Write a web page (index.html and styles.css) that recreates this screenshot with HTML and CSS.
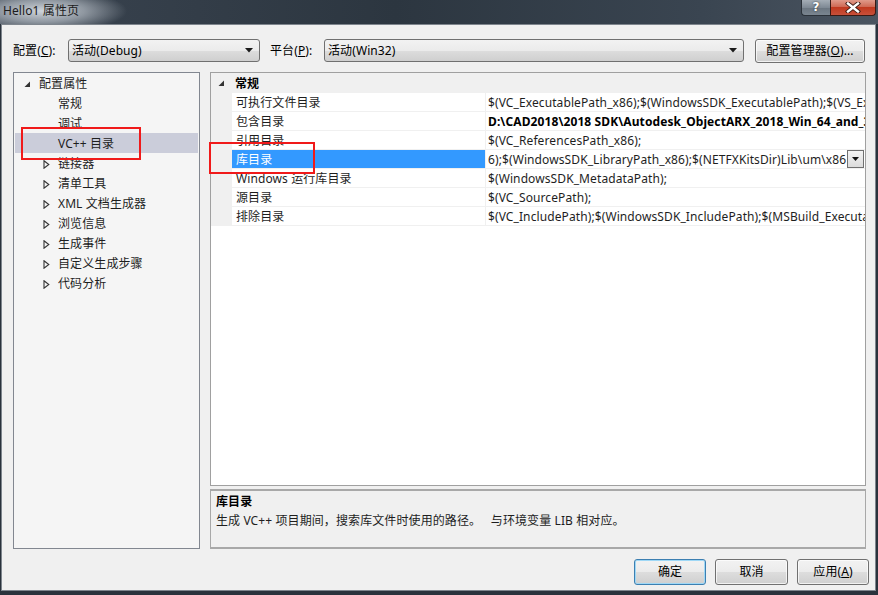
FILE: index.html
```html
<!DOCTYPE html>
<html lang="zh-CN">
<head>
  <meta charset="UTF-8">
  <title>Hello1 属性页</title>
  <link rel="stylesheet" href="styles.css">
</head>
<body>
  <div class="window">
    <div class="titlebar">
      <span class="title">Hello1 属性页</span>
      <div class="caption-btns">
        <div class="cap-help">?</div>
        <div class="cap-close">
          <svg width="16" height="11" viewBox="0 0 16 11"><path d="M3 1.5 L13 9.5 M13 1.5 L3 9.5" stroke="#3a1a14" stroke-width="4.2" stroke-linecap="square"/><path d="M3 1.5 L13 9.5 M13 1.5 L3 9.5" stroke="#ffffff" stroke-width="2.4" stroke-linecap="square"/></svg>
        </div>
      </div>
    </div>

    <div class="client">
      <div class="toolbar">
        <span class="lbl lbl-config">配置(<u>C</u>):</span>
        <div class="combo combo-config">
          <span>活动(Debug)</span>
          <svg class="arrow" width="8" height="5" viewBox="0 0 8 5"><path d="M0 0 H8 L4 4.5 Z" fill="#1a1a1a"/></svg>
        </div>
        <span class="lbl lbl-platform">平台(<u>P</u>):</span>
        <div class="combo combo-platform">
          <span>活动(Win32)</span>
          <svg class="arrow" width="8" height="5" viewBox="0 0 8 5"><path d="M0 0 H8 L4 4.5 Z" fill="#1a1a1a"/></svg>
        </div>
        <div class="btn btn-manager">配置管理器(<u>O</u>)...</div>
      </div>

      <div class="main">
        <div class="tree">
          <div class="tree-row top">
            <span class="exp"><svg width="7" height="7" viewBox="0 0 7 7"><path d="M6 0.5 V6 H0.5 Z" fill="#333"/></svg></span>
            <span>配置属性</span>
          </div>
          <div class="tree-row child"><span class="exp"></span><span>常规</span></div>
          <div class="tree-row child"><span class="exp"></span><span>调试</span></div>
          <div class="tree-row child selected"><span class="exp"></span><span>VC++ 目录</span></div>
          <div class="tree-row child"><span class="exp"><svg width="7" height="9" viewBox="0 0 7 9"><path d="M1 0.8 L5.8 4.5 L1 8.2 Z" fill="none" stroke="#333" stroke-width="1.1"/></svg></span><span>链接器</span></div>
          <div class="tree-row child"><span class="exp"><svg width="7" height="9" viewBox="0 0 7 9"><path d="M1 0.8 L5.8 4.5 L1 8.2 Z" fill="none" stroke="#333" stroke-width="1.1"/></svg></span><span>清单工具</span></div>
          <div class="tree-row child"><span class="exp"><svg width="7" height="9" viewBox="0 0 7 9"><path d="M1 0.8 L5.8 4.5 L1 8.2 Z" fill="none" stroke="#333" stroke-width="1.1"/></svg></span><span>XML 文档生成器</span></div>
          <div class="tree-row child"><span class="exp"><svg width="7" height="9" viewBox="0 0 7 9"><path d="M1 0.8 L5.8 4.5 L1 8.2 Z" fill="none" stroke="#333" stroke-width="1.1"/></svg></span><span>浏览信息</span></div>
          <div class="tree-row child"><span class="exp"><svg width="7" height="9" viewBox="0 0 7 9"><path d="M1 0.8 L5.8 4.5 L1 8.2 Z" fill="none" stroke="#333" stroke-width="1.1"/></svg></span><span>生成事件</span></div>
          <div class="tree-row child"><span class="exp"><svg width="7" height="9" viewBox="0 0 7 9"><path d="M1 0.8 L5.8 4.5 L1 8.2 Z" fill="none" stroke="#333" stroke-width="1.1"/></svg></span><span>自定义生成步骤</span></div>
          <div class="tree-row child"><span class="exp"><svg width="7" height="9" viewBox="0 0 7 9"><path d="M1 0.8 L5.8 4.5 L1 8.2 Z" fill="none" stroke="#333" stroke-width="1.1"/></svg></span><span>代码分析</span></div>
        </div>

        <div class="right">
          <div class="grid">
            <div class="cat-row">
              <span class="gutter"><svg width="7" height="7" viewBox="0 0 7 7"><path d="M6 0.5 V6 H0.5 Z" fill="#333"/></svg></span>
              <span class="cat-name">常规</span>
            </div>
            <div class="prop-row">
              <span class="gutter"></span>
              <span class="name">可执行文件目录</span>
              <span class="value">$(VC_ExecutablePath_x86);$(WindowsSDK_ExecutablePath);$(VS_ExecutablePath);$(MSBuild_ExecutablePath);$(SystemRoot)\SysWow64;$(FxCopDir);$(PATH);</span>
            </div>
            <div class="prop-row">
              <span class="gutter"></span>
              <span class="name">包含目录</span>
              <span class="value bold">D:\CAD2018\2018 SDK\Autodesk_ObjectARX_2018_Win_64_and_32_Bit\inc;$(IncludePath)</span>
            </div>
            <div class="prop-row">
              <span class="gutter"></span>
              <span class="name">引用目录</span>
              <span class="value">$(VC_ReferencesPath_x86);</span>
            </div>
            <div class="prop-row active">
              <span class="gutter"></span>
              <span class="name">库目录</span>
              <span class="value edit">
                <span class="edit-text">6);$(WindowsSDK_LibraryPath_x86);$(NETFXKitsDir)Lib\um\x86</span>
                <span class="drop"><svg width="7" height="4" viewBox="0 0 7 4"><path d="M0 0 H7 L3.5 4 Z" fill="#111"/></svg></span>
              </span>
            </div>
            <div class="prop-row">
              <span class="gutter"></span>
              <span class="name">Windows 运行库目录</span>
              <span class="value">$(WindowsSDK_MetadataPath);</span>
            </div>
            <div class="prop-row">
              <span class="gutter"></span>
              <span class="name">源目录</span>
              <span class="value">$(VC_SourcePath);</span>
            </div>
            <div class="prop-row">
              <span class="gutter"></span>
              <span class="name">排除目录</span>
              <span class="value">$(VC_IncludePath);$(WindowsSDK_IncludePath);$(MSBuild_ExecutablePath);$(VC_LibraryPath_x86);</span>
            </div>
          </div>
          <div class="desc">
            <div class="desc-title">库目录</div>
            <div class="desc-text">生成 VC++ 项目期间，搜索库文件时使用的路径。&nbsp;&nbsp; 与环境变量 LIB 相对应。</div>
          </div>
        </div>
      </div>

      <div class="buttons">
        <div class="btn btn-ok">确定</div>
        <div class="btn btn-cancel">取消</div>
        <div class="btn btn-apply">应用(<u>A</u>)</div>
      </div>
    </div>
  </div>

  <!-- annotations -->
  <div class="mark mark-tree"></div>
  <div class="mark mark-grid"></div>
</body>
</html>
```

FILE: styles.css
```css
* {
  box-sizing: border-box;
}

body {
  margin: 0;
  width: 878px;
  height: 595px;
  overflow: hidden;
  background-color: #2a323c;
  font-family: "Noto Sans", "Noto Sans CJK SC", sans-serif;
  font-size: 12px;
  letter-spacing: 0.1px;
  color: #000;
}

.window {
  width: 878px;
  height: 595px;
}

/* barre de titre */
.titlebar {
  height: 24px;
  display: flex;
  align-items: flex-start;
  background:
    radial-gradient(ellipse 85px 22px at 42px 11px, rgba(215,220,226,0.95) 0, rgba(190,197,205,0.65) 50%, rgba(60,70,82,0) 100%),
    linear-gradient(to right, #3a4450 0, #2c3640 45%, #3a4551 80%, #4a5460 100%);
}

.title {
  padding: 3px 0 0 3px;
  line-height: 16px;
  color: #1c1c1c;
}

.caption-btns {
  margin-left: auto;
  margin-right: 2px;
  display: flex;
  height: 16px;
}

.cap-help {
  width: 29px;
  height: 16px;
  border: 1px solid #2b323a;
  border-top: none;
  border-right: none;
  border-radius: 0 0 0 4px;
  background: linear-gradient(to bottom, #a4adb6 0, #7f8a95 50%, #6a7580 51%, #7a8590 100%);
  color: #fff;
  font-family: "DejaVu Sans", sans-serif;
  font-weight: bold;
  font-size: 12px;
  line-height: 14px;
  text-align: center;
  text-shadow: 0 0 2px #222;
}

.cap-close {
  width: 46px;
  height: 16px;
  border: 1px solid #3a1a14;
  border-top: none;
  border-radius: 0 0 4px 0;
  background: linear-gradient(to bottom, #e09a8a 0, #cf6a55 45%, #c0391f 50%, #c8503a 100%);
  display: flex;
  align-items: center;
  justify-content: center;
}

/* zone client */
.client {
  margin-left: 1px;
  width: 875px;
  height: 567px;
  background-color: #f0f0f0;
  border: 1px solid #7e858d;
  padding: 14px 9px 0 11px;
}

.toolbar {
  display: flex;
  align-items: center;
  height: 23px;
}

.lbl {
  line-height: 20px;
}

.lbl-config {
  width: 55px;
}

.lbl-platform {
  width: 54px;
  margin-left: 10px;
}

.combo {
  height: 23px;
  border: 1px solid #707070;
  border-radius: 3px;
  background: linear-gradient(to bottom, #f2f2f2 0, #ebebeb 50%, #dddddd 51%, #cfcfcf 100%);
  padding-left: 3px;
  line-height: 21px;
  display: flex;
  align-items: center;
}

.combo .arrow {
  margin-left: auto;
  margin-right: 6px;
}

.combo-config {
  width: 192px;
}

.combo-platform {
  width: 420px;
}

.btn {
  height: 26px;
  border: 1px solid #707070;
  border-radius: 3px;
  background: linear-gradient(to bottom, #f2f2f2 0, #ebebeb 50%, #dddddd 51%, #cfcfcf 100%);
  display: flex;
  align-items: center;
  justify-content: center;
  line-height: 20px;
  box-shadow: inset 0 0 0 1px rgba(255,255,255,0.7);
}

.btn-manager {
  width: 110px;
  height: 24px;
  margin-left: 11px;
}

/* zone principale */
.main {
  display: flex;
  gap: 10px;
  margin-top: 10px;
  height: 477px;
}

.tree {
  width: 187px;
  background-color: #f5f5f5;
  border: 1px solid #828790;
}

.tree-row {
  display: flex;
  align-items: center;
  height: 20px;
  padding-top: 2px;
  line-height: 18px;
  margin: 0 1px;
  color: #1e1e1e;
}

.tree-row.top {
  padding-left: 9px;
}

.tree-row.child {
  padding-left: 28px;
}

.tree-row .exp {
  width: 15px;
  display: flex;
  align-items: center;
}

.tree-row.selected {
  background-color: #cbcdda;
}

.right {
  width: 656px;
  display: flex;
  flex-direction: column;
  gap: 3px;
}

/* grille de propriétés */
.grid {
  height: 414px;
  background-color: white;
  border: 1px solid #a0a0a0;
}

.cat-row {
  display: flex;
  height: 20px;
  align-items: center;
  background-color: #f0f0f0;
  font-weight: bold;
}

.gutter {
  width: 21px;
  height: 100%;
  flex: none;
  background-color: #f0f0f0;
  display: flex;
  align-items: center;
  padding-left: 7px;
}

.cat-name {
  padding: 2px 0 0 3px;
  line-height: 18px;
}

.prop-row {
  display: flex;
  height: 19px;
  line-height: 16px;
}

.prop-row .name {
  width: 254px;
  flex: none;
  padding: 2px 0 0 4px;
  border-bottom: 1px solid #f0f0f0;
  border-right: 1px solid #f0f0f0;
  white-space: nowrap;
  color: #1e1e1e;
}

.prop-row .value {
  flex: 1;
  padding: 2px 0 0 2px;
  border-bottom: 1px solid #f0f0f0;
  white-space: nowrap;
  overflow: hidden;
  color: #1e1e1e;
}

.prop-row .value.bold {
  font-weight: bold;
  color: #000;
}

.prop-row.active .name {
  background-color: #3399ff;
  color: white;
}

.value.edit {
  display: flex;
  align-items: center;
  padding-top: 0;
}

.edit-text {
  overflow: hidden;
  white-space: nowrap;
  flex: 1;
  padding-top: 2px;
}

.drop {
  width: 17px;
  height: 18px;
  flex: none;
  margin-right: 1px;
  border: 1px solid #707070;
  background: linear-gradient(to bottom, #f4f4f4, #dcdcdc);
  display: flex;
  align-items: center;
  justify-content: center;
}

/* description */
.desc {
  height: 60px;
  background-color: #f0f0f0;
  border: 1px solid #a8a8a8;
  border-top-width: 2px;
  border-bottom-width: 2px;
  padding: 1px 5px;
}

.desc-title {
  font-weight: bold;
  line-height: 19px;
}

.desc-text {
  line-height: 19px;
  color: #1e1e1e;
}

/* boutons */
.buttons {
  display: flex;
  justify-content: flex-end;
  gap: 9px;
  margin-top: 10px;
  margin-right: -3px;
}

.btn-ok {
  width: 72px;
  border-color: #3c7fb1;
  box-shadow: inset 0 0 0 1px #9fd8f6;
}

.btn-cancel {
  width: 73px;
}

.btn-apply {
  width: 72px;
}

/* annotations rouges */
.mark {
  position: absolute;
  border: 2px solid #f01a1a;
}

.mark-tree {
  left: 21px;
  top: 127px;
  width: 120px;
  height: 33px;
}

.mark-grid {
  left: 209px;
  top: 142px;
  width: 106px;
  height: 32px;
}
```
